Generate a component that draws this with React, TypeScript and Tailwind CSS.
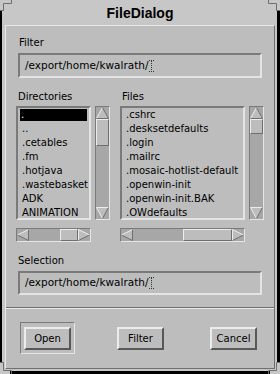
import React from "react";

function ArrowUp() {
  return (
    <svg width="13" height="12" viewBox="0 0 13 12" className="block">
      <polygon points="6.5,0.5 12.5,11.5 0.5,11.5" fill="#bdbdbd" />
      <line x1="6.5" y1="0.5" x2="0.5" y2="11.5" stroke="#ececec" strokeWidth="1" />
      <line x1="6.5" y1="0.5" x2="12.5" y2="11.5" stroke="#6f6f6f" strokeWidth="1" />
      <line x1="0.5" y1="11.5" x2="12.5" y2="11.5" stroke="#6f6f6f" strokeWidth="1" />
    </svg>
  );
}
function ArrowDown() {
  return (
    <svg width="13" height="12" viewBox="0 0 13 12" className="block">
      <polygon points="0.5,0.5 12.5,0.5 6.5,11.5" fill="#bdbdbd" />
      <line x1="0.5" y1="0.5" x2="12.5" y2="0.5" stroke="#ececec" strokeWidth="1" />
      <line x1="0.5" y1="0.5" x2="6.5" y2="11.5" stroke="#ececec" strokeWidth="1" />
      <line x1="12.5" y1="0.5" x2="6.5" y2="11.5" stroke="#6f6f6f" strokeWidth="1" />
    </svg>
  );
}
function ArrowLeft() {
  return (
    <svg width="12" height="12" viewBox="0 0 12 12" className="block">
      <polygon points="0.5,6 11.5,0.5 11.5,11.5" fill="#bdbdbd" />
      <line x1="0.5" y1="6" x2="11.5" y2="0.5" stroke="#ececec" strokeWidth="1" />
      <line x1="0.5" y1="6" x2="11.5" y2="11.5" stroke="#6f6f6f" strokeWidth="1" />
      <line x1="11.5" y1="0.5" x2="11.5" y2="11.5" stroke="#6f6f6f" strokeWidth="1" />
    </svg>
  );
}
function ArrowRight() {
  return (
    <svg width="12" height="12" viewBox="0 0 12 12" className="block">
      <polygon points="0.5,0.5 11.5,6 0.5,11.5" fill="#bdbdbd" />
      <line x1="0.5" y1="0.5" x2="0.5" y2="11.5" stroke="#ececec" strokeWidth="1" />
      <line x1="0.5" y1="0.5" x2="11.5" y2="6" stroke="#ececec" strokeWidth="1" />
      <line x1="0.5" y1="11.5" x2="11.5" y2="6" stroke="#6f6f6f" strokeWidth="1" />
    </svg>
  );
}

function Cursor() {
  return (
    <svg width="6" height="12" viewBox="0 0 6 12" className="inline-block align-middle ml-[1px]">
      <line x1="0" y1="0.5" x2="5" y2="0.5" stroke="#333" strokeDasharray="1 1" />
      <line x1="2.5" y1="1" x2="2.5" y2="11" stroke="#333" strokeDasharray="1 1" />
      <line x1="0" y1="11.5" x2="5" y2="11.5" stroke="#333" strokeDasharray="1 1" />
    </svg>
  );
}

function VScroll({ thumb }: { thumb: number }) {
  return (
    <div className="w-[15px] h-[114px] flex flex-col items-center bg-[#a7a7a7] border border-t-[#7a7a7a] border-l-[#7a7a7a] border-b-[#e6e6e6] border-r-[#e6e6e6]">
      <ArrowUp />
      <div
        className="w-[13px] bg-[#bdbdbd] border border-t-[#ececec] border-l-[#ececec] border-b-[#6f6f6f] border-r-[#6f6f6f]"
        style={{ height: thumb }}
      />
      <div className="flex-1" />
      <ArrowDown />
    </div>
  );
}

function HScroll({ width, thumb }: { width: number; thumb: number }) {
  return (
    <div
      className="h-[14px] flex items-center bg-[#a7a7a7] border border-t-[#7a7a7a] border-l-[#7a7a7a] border-b-[#e6e6e6] border-r-[#e6e6e6]"
      style={{ width }}
    >
      <ArrowLeft />
      <div className="flex-1" />
      <div
        className="h-[12px] bg-[#bdbdbd] border border-t-[#ececec] border-l-[#ececec] border-b-[#6f6f6f] border-r-[#6f6f6f]"
        style={{ width: thumb }}
      />
      <ArrowRight />
    </div>
  );
}

function List({ items, width, selected }: { items: string[]; width: number; selected?: number }) {
  return (
    <div
      className="h-[114px] overflow-hidden border-2 border-t-[#7a7a7a] border-l-[#7a7a7a] border-b-[#e4e4e4] border-r-[#e4e4e4] pt-[0px] px-[2px]"
      style={{ width }}
    >
      {items.map((it, i) => (
        <div key={i} className="h-[14px] flex items-center">
          <div
            className={
              i === selected
                ? "w-full h-[12px] bg-black text-white pl-[1px] leading-[12px] whitespace-nowrap"
                : "w-full pl-[2px] leading-[14px] whitespace-nowrap"
            }
          >
            {it}
          </div>
        </div>
      ))}
    </div>
  );
}

function Button({ label }: { label: string }) {
  return (
    <div className="w-[47px] h-[23px] flex items-center justify-center bg-[#bdbdbd] border-2 border-t-[#ececec] border-l-[#ececec] border-b-[#585858] border-r-[#585858] text-[10px]">
      {label}
    </div>
  );
}

export default function App() {
  const dirs = [".", "..", ".cetables", ".fm", ".hotjava", ".wastebasket", "ADK", "ANIMATION"];
  const files = [
    ".cshrc",
    ".desksetdefaults",
    ".login",
    ".mailrc",
    ".mosaic-hotlist-default",
    ".openwin-init",
    ".openwin-init.BAK",
    ".OWdefaults",
  ];
  return (
    <div className="relative w-[280px] h-[374px] bg-[#c7c7c7] overflow-hidden text-black font-['DejaVu_Sans',sans-serif] text-[10px]">
      {/* window frame */}
      <div className="absolute left-0 top-[10px] h-[353px] w-[2px] bg-black" />
      <div className="absolute right-0 top-[10px] h-[353px] w-[3px] bg-black" />
      <div className="absolute left-[10px] bottom-0 w-[260px] h-[3px] bg-black" />
      <svg className="absolute left-0 top-0" width="12" height="12">
        <polyline points="11.5,0 11.5,3.5 3.5,3.5 3.5,10.5 0,10.5" fill="none" stroke="#6f6f6f" />
      </svg>
      <svg className="absolute right-0 top-0" width="12" height="12">
        <polyline points="0.5,0 0.5,3.5 8.5,3.5 8.5,10.5 12,10.5" fill="none" stroke="#6f6f6f" />
      </svg>
      <svg className="absolute left-0 bottom-0" width="12" height="12">
        <polyline points="0,0.5 3.5,0.5 3.5,8.5 11.5,8.5 11.5,12" fill="none" stroke="#6f6f6f" />
      </svg>
      <svg className="absolute right-0 bottom-0" width="12" height="12">
        <polyline points="12,0.5 8.5,0.5 8.5,8.5 0.5,8.5 0.5,12" fill="none" stroke="#6f6f6f" />
      </svg>

      {/* title */}
      <div className="h-[25px] flex items-center justify-center font-['Liberation_Sans',sans-serif] font-bold text-[14px] pt-[1px]">
        FileDialog
      </div>

      {/* panel */}
      <div className="ml-[5px] w-[270px] h-[344px] bg-[#bdbdbd] border border-t-[#e8e8e8] border-l-[#e8e8e8] border-b-[#6f6f6f] border-r-[#6f6f6f] flex flex-col">
        <div className="ml-[13px] mt-[10px] h-[14px] leading-[14px]">Filter</div>
        <div className="ml-[12px] mt-[3px] w-[244px] h-[25px] flex items-center pl-[5px] border-2 border-t-[#7a7a7a] border-l-[#7a7a7a] border-b-[#e4e4e4] border-r-[#e4e4e4] text-[10.5px] whitespace-nowrap">
          /export/home/kwalrath/
          <Cursor />
        </div>

        <div className="mt-[12px] h-[14px] leading-[14px] flex">
          <div className="ml-[12px] w-[104px]">Directories</div>
          <div>Files</div>
        </div>

        <div className="mt-[2px] ml-[10px] flex">
          <List items={dirs} width={75} selected={0} />
          <div className="ml-[4px]">
            <VScroll thumb={27} />
          </div>
          <div className="ml-[10px]">
            <List items={files} width={125} />
          </div>
          <div className="ml-[4px]">
            <VScroll thumb={15} />
          </div>
        </div>

        <div className="mt-[8px] ml-[10px] flex">
          <HScroll width={75} thumb={18} />
          <div className="ml-[29px]">
            <HScroll width={125} thumb={49} />
          </div>
        </div>

        <div className="ml-[12px] mt-[12px] h-[14px] leading-[14px]">Selection</div>
        <div className="ml-[12px] mt-[3px] w-[244px] h-[24px] flex items-center pl-[5px] border-2 border-t-[#7a7a7a] border-l-[#7a7a7a] border-b-[#e4e4e4] border-r-[#e4e4e4] text-[10.5px] whitespace-nowrap">
          /export/home/kwalrath
          <span className="relative">/</span>
          <Cursor />
        </div>

        <div className="mt-[12px] h-[2px] border-t border-t-[#6f6f6f] border-b border-b-[#e8e8e8]" />

        <div className="mt-[13px] flex items-center">
          <div className="ml-[14px] w-[55px] h-[32px] flex items-center justify-center border border-t-[#7a7a7a] border-l-[#7a7a7a] border-b-[#e6e6e6] border-r-[#e6e6e6]">
            <Button label="Open" />
          </div>
          <div className="ml-[42px]">
            <Button label="Filter" />
          </div>
          <div className="ml-[46px]">
            <Button label="Cancel" />
          </div>
        </div>
      </div>
    </div>
  );
}
